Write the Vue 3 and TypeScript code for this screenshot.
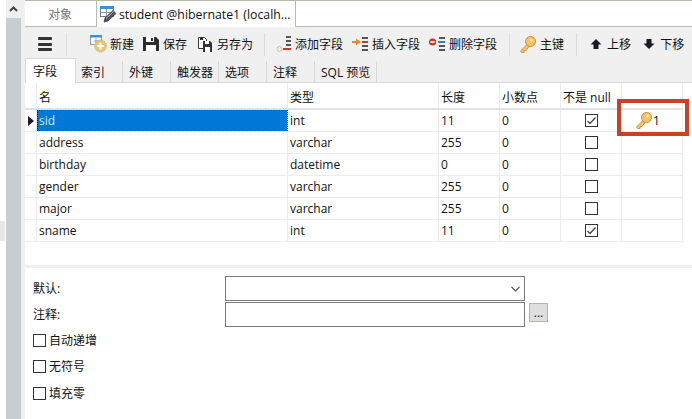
<script setup lang="ts">
interface Row { name: string; type: string; len: string; dec: string; notNull: boolean; key?: string }
const rows: Row[] = [
  { name: 'sid', type: 'int', len: '11', dec: '0', notNull: true, key: '1' },
  { name: 'address', type: 'varchar', len: '255', dec: '0', notNull: false },
  { name: 'birthday', type: 'datetime', len: '0', dec: '0', notNull: false },
  { name: 'gender', type: 'varchar', len: '255', dec: '0', notNull: false },
  { name: 'major', type: 'varchar', len: '255', dec: '0', notNull: false },
  { name: 'sname', type: 'int', len: '11', dec: '0', notNull: true },
]
const subTabs = ['字段', '索引', '外键', '触发器', '选项', '注释', 'SQL 预览']
const options = ['自动递增', '无符号', '填充零']
</script>

<template>
  <div class="app">
    <aside class="rail">
      <div class="grip"></div>
      <div class="scroll">
        <div class="scroll-up"><svg width="9" height="6" viewBox="0 0 9 6"><path d="M1 5 L4.5 1.5 L8 5" fill="none" stroke="#444" stroke-width="2"/></svg></div>
      </div>
    </aside>
    <main class="main">
      <div class="doc-tabs">
        <div class="doc-tab inactive">对象</div>
        <div class="doc-tab active">
          <svg class="doc-icon" width="18" height="18" viewBox="0 0 18 18">
            <rect x="0.5" y="1.5" width="13" height="10" fill="#fff" stroke="#75808c"/>
            <rect x="0" y="1" width="14" height="3" fill="#3c8fd8"/>
            <path d="M1 7.5h12M6.5 4v8" stroke="#8e99a4" fill="none"/>
            <path d="M4 17 L5 13 L13 5.5 L16 8.5 L8 16 Z" fill="#555" stroke="#2e2e2e" stroke-width=".7"/>
            <path d="M6 13.5 L13.5 6.5" stroke="#bbb" stroke-width="1"/>
          </svg>
          <span>student @hibernate1 (localh...</span>
        </div>
      </div>

      <div class="toolbar">
        <button class="tool menu"><span class="burger"><i></i><i></i><i></i></span></button>
        <span class="sep"></span>
        <button class="tool new">
          <svg width="18" height="18" viewBox="0 0 18 18">
            <rect x="0.5" y="0.5" width="11" height="9" fill="#fff" stroke="#8b98a5"/>
            <rect x="0" y="0" width="12" height="2.5" fill="#3c8fd8"/>
            <path d="M4 6h7M6 3v6" stroke="#9aa4ae" fill="none"/>
            <circle cx="10.5" cy="11" r="6" fill="#e3c777" stroke="#cdb25f" stroke-dasharray="1.4 1"/>
            <path d="M10.5 7.5v7M7 11h7" stroke="#fff" stroke-width="2"/>
          </svg>
          新建
        </button>
        <button class="tool save">
          <svg width="16" height="16" viewBox="0 0 16 16">
            <path d="M0 1h13l3 3v11H0z" fill="#2d2d2d"/>
            <rect x="3" y="1" width="8" height="5" fill="#fff"/>
            <rect x="8" y="2" width="2" height="3" fill="#2d2d2d"/>
            <rect x="3" y="9" width="10" height="6" fill="#fff"/>
          </svg>
          保存
        </button>
        <button class="tool saveas">
          <svg width="16" height="16" viewBox="0 0 16 16">
            <path d="M1.5 1.5h6l2 2v9h-8z" fill="#fff" stroke="#333"/>
            <rect x="3" y="1" width="3" height="3" fill="#333"/>
            <path d="M6 5h7l2 2v9H6z" fill="#333"/>
            <rect x="8" y="5" width="4" height="3" fill="#fff"/>
            <rect x="8" y="11" width="5" height="5" fill="#fff"/>
          </svg>
          另存为
        </button>
        <span class="sep"></span>
        <button class="tool add">
          <svg width="16" height="16" viewBox="0 0 16 16">
            <path d="M10 0h5v2h-5zM10 4h5v2h-5zM10 8h5v2h-5z" fill="#555"/>
            <rect x="7" y="12" width="8" height="2" fill="#c8392b"/>
            <circle cx="3.5" cy="13" r="3" fill="#d8cfa8"/>
            <path d="M3.5 11v4M1.5 13h4" stroke="#fff" stroke-width="1.2"/>
          </svg>
          添加字段
        </button>
        <button class="tool ins">
          <svg width="16" height="16" viewBox="0 0 16 16">
            <path d="M10 1h6v2h-6zM10 9h6v2h-6zM10 13h6v2h-6z" fill="#555"/>
            <rect x="10" y="5" width="6" height="2" fill="#c8392b"/>
            <path d="M0 5h4V2.5L9 6 4 9.500V7H0z" fill="#e98a2c"/>
          </svg>
          插入字段
        </button>
        <button class="tool del">
          <svg width="16" height="16" viewBox="0 0 16 16">
            <path d="M10 1h6v2h-6zM10 9h6v2h-6zM10 13h6v2h-6z" fill="#555"/>
            <rect x="9" y="5" width="7" height="2" fill="#2f7fc8"/>
            <circle cx="3.600" cy="6" r="3.600" fill="#c8392b"/>
            <rect x="1.500" y="5.200" width="4.200" height="1.600" fill="#fff"/>
          </svg>
          删除字段
        </button>
        <span class="sep"></span>
        <button class="tool pk">
          <svg width="17" height="17" viewBox="0 0 17 17">
            <path d="M8.500 8 L1.500 15 L2.500 16.500 L5 16.500 L5 14.500 L7 14.500 L10 10.500z" fill="#f5c36a" stroke="#d98d2b" stroke-width=".9"/>
            <circle cx="11.500" cy="5.500" r="5" fill="#f5c36a" stroke="#d98d2b"/>
            <circle cx="12.500" cy="4" r="1.500" fill="#fde3a8"/>
          </svg>
          主键
        </button>
        <span class="sep"></span>
        <button class="tool up">
          <svg width="12" height="12" viewBox="0 0 12 12"><path d="M6 1 L11.500 6.500 H8.500 V11 H3.500 V6.500 H.5z" fill="#151a24"/></svg>
          上移
        </button>
        <button class="tool down">
          <svg width="12" height="12" viewBox="0 0 12 12"><path d="M6 11 L11.500 5.500 H8.500 V1 H3.500 V5.500 H.5z" fill="#151a24"/></svg>
          下移
        </button>
      </div>

      <div class="sub-tabs">
        <div v-for="(t, i) in subTabs" :key="t" class="sub-tab" :class="{ on: i === 0, wide: i === 6 }">{{ t }}</div>
      </div>

      <div class="grid">
        <div class="tr head">
          <div class="td ind"></div>
          <div class="td">名</div>
          <div class="td">类型</div>
          <div class="td">长度</div>
          <div class="td">小数点</div>
          <div class="td">不是 null</div>
          <div class="td"></div>
        </div>
        <div v-for="(r, i) in rows" :key="r.name" class="tr">
          <div class="td ind"><span v-if="i === 0" class="caret"></span></div>
          <div class="td" :class="{ sel: i === 0 }">{{ r.name }}</div>
          <div class="td">{{ r.type }}</div>
          <div class="td">{{ r.len }}</div>
          <div class="td">{{ r.dec }}</div>
          <div class="td center">
            <span class="cb">
              <svg v-if="r.notNull" width="11" height="11" viewBox="0 0 11 11"><path d="M1.500 6 L4 8.500 L9.500 2.500" fill="none" stroke="#444" stroke-width="1.300"/></svg>
            </span>
          </div>
          <div class="td keycell">
            <template v-if="r.key">
              <svg width="17" height="17" viewBox="0 0 17 17">
                <path d="M8.500 8 L1.500 15 L2.500 16.500 L5 16.500 L5 14.500 L7 14.500 L10 10.500z" fill="#f5c36a" stroke="#d98d2b" stroke-width=".9"/>
                <circle cx="11.500" cy="5.500" r="5" fill="#f5c36a" stroke="#d98d2b"/>
                <circle cx="12.500" cy="4" r="1.500" fill="#fde3a8"/>
              </svg>
              <span>{{ r.key }}</span>
            </template>
          </div>
        </div>
        <div class="highlight"></div>
      </div>

      <div class="divider"></div>

      <form class="form" @submit.prevent>
        <div class="form-row">
          <label class="lbl">默认:</label>
          <div class="field">
            <svg class="chev" width="9" height="6" viewBox="0 0 9 6"><path d="M.5 1 L4.500 5 L8.500 1" fill="none" stroke="#555" stroke-width="1.200"/></svg>
          </div>
        </div>
        <div class="form-row">
          <label class="lbl">注释:</label>
          <div class="field"></div>
          <button type="button" class="more">...</button>
        </div>
        <div class="opts">
          <label v-for="o in options" :key="o" class="opt"><span class="cb"></span>{{ o }}</label>
        </div>
      </form>
    </main>
  </div>
</template>

<style>
html, body { margin: 0; background: #fff; overflow: hidden; }
</style>

<style scoped>
.app {
  width: 692px; height: 419px; display: flex; overflow: hidden; background: #fff;
  font-family: "Open Sans", "Noto Sans CJK SC", sans-serif; font-size: 12px; color: #111;
}
svg { flex: none; }
.rail { width: 25px; flex: none; padding-left: 6px; box-sizing: border-box; display: flex; position: relative; background: linear-gradient(to right, #fff 6px, #f0f0f0 6px); }
.grip { position: absolute; left: 0; top: 221px; width: 5px; height: 20px; background: #e6e6e6; }
.scroll { width: 15px; background: #c9cdd0; position: relative; }
.scroll-up { height: 18px; background: #f0f0f0; display: flex; align-items: center; justify-content: center; }
.main { flex: 1; min-width: 0; display: flex; flex-direction: column; }

.doc-tabs { height: 27px; flex: none; box-sizing: border-box; display: flex; align-items: flex-end; border-top: 1px solid #b9b9ac; border-bottom: 1px solid #b9b9ac; background: #fff; }
.doc-tab { height: 26px; box-sizing: border-box; display: flex; align-items: center; margin-bottom: -1px; }
.doc-tab.inactive { width: 70px; justify-content: center; color: #777; font-size: 12px; background: #fff; border-bottom: 1px solid #b9b9ac; }
.doc-tab.active { width: 200px; margin-left: 1px; padding-left: 3px; gap: 1px; font-size: 12.3px; border-left: 1px solid #b9b9ac; border-right: 1px solid #b9b9ac; white-space: nowrap; background: #fff; }

.toolbar { height: 31px; flex: none; box-sizing: border-box; display: flex; align-items: center; background: #f0f0f0; padding: 3px 0 0 13px; }
.tool { display: flex; align-items: center; gap: 4px; padding: 0; border: 0; background: none; font: inherit; color: inherit; white-space: nowrap; }
.burger { display: flex; flex-direction: column; gap: 2.5px; width: 14px; }
.burger i { display: block; height: 3px; background: #333; border-radius: 1px; }
.sep { width: 1px; height: 23px; background: #dcdcdc; flex: none; }
.menu { width: 28px; }
.menu + .sep { margin-right: 23px; }
.new { margin-right: 9px; gap: 2px; }
.save { margin-right: 10px; }
.saveas { margin-right: 11px; }
.saveas + .sep { margin-right: 11px; }
.add { margin-right: 9px; gap: 3px; }
.ins { margin-right: 9px; }
.del { margin-right: 12px; }
.del + .sep { margin-right: 9px; }
.pk { margin-right: 12px; }
.pk + .sep { margin-right: 13px; }
.up { margin-right: 12px; gap: 5px; }
.down { gap: 5px; }

.sub-tabs { height: 25px; flex: none; box-sizing: border-box; display: flex; align-items: flex-end; background: #f0f0f0; border-bottom: 1px solid #d9d9d9; }
.sub-tab { width: 48px; height: 21px; box-sizing: border-box; display: flex; align-items: center; padding-left: 6px; border-right: 1px solid #d9d9d9; white-space: nowrap; }
.sub-tab.on { width: 51px; height: 25px; margin-right: -1px; margin-bottom: -1px; padding: 0 0 1px 7px; background: #fff; border: 1px solid #d9d9d9; border-bottom: 0; position: relative; }
.sub-tab.wide { width: 62px; }

.grid { position: relative; flex: none; height: 182px; background: #fff; }
.tr { display: grid; grid-template-columns: 12px 251px 151px 61px 61px 61px 61px; height: 22px; box-sizing: border-box; border-bottom: 1px solid #ececec; width: 658px; }
.head { height: 27px; border-bottom: 2px solid #e2e2e2; }
.head .td { padding-top: 3px; }
.td { display: flex; align-items: center; box-sizing: border-box; border-right: 1px solid #ececec; padding-left: 2px; overflow: hidden; }
.ind { padding: 0; }
.sel { background: #0078d7; outline: 1px dotted #1a1a1a; outline-offset: -1px; color: #dfe9f5; }
.caret { width: 0; height: 0; border-left: 6px solid #24122e; border-top: 5px solid transparent; border-bottom: 5px solid transparent; margin-left: 3px; }
.center { justify-content: center; padding: 0; }
.cb { width: 13px; height: 13px; box-sizing: border-box; border: 1px solid #333; background: #fff; display: inline-flex; align-items: center; justify-content: center; flex: none; }
.keycell { gap: 1px; padding-left: 13px; }
.highlight { position: absolute; left: 592px; top: 16px; width: 72px; height: 37px; box-sizing: border-box; border: 4px solid #c9402b; pointer-events: none; }

.divider { height: 3px; flex: none; background: #f0f0f0; }
.form { flex: 1; padding: 8px 0 0 8px; }
.form-row { display: flex; align-items: flex-start; height: 26px; }
.lbl { width: 192px; line-height: 25px; }
.field { width: 300px; height: 25px; box-sizing: border-box; border: 1px solid #7a7a7a; display: flex; align-items: center; justify-content: flex-end; padding-right: 4px; background: #fff; }
.more { width: 19px; height: 19px; margin: 1px 0 0 4px; padding: 0 0 3px; box-sizing: border-box; border: 1px solid #b5b5ad; background: #dedede; font: inherit; color: #222; }
.opts { margin-top: -1px; }
.opt { display: flex; align-items: center; gap: 3px; height: 26px; }
.opt:last-child { margin-top: 1px; }
</style>
